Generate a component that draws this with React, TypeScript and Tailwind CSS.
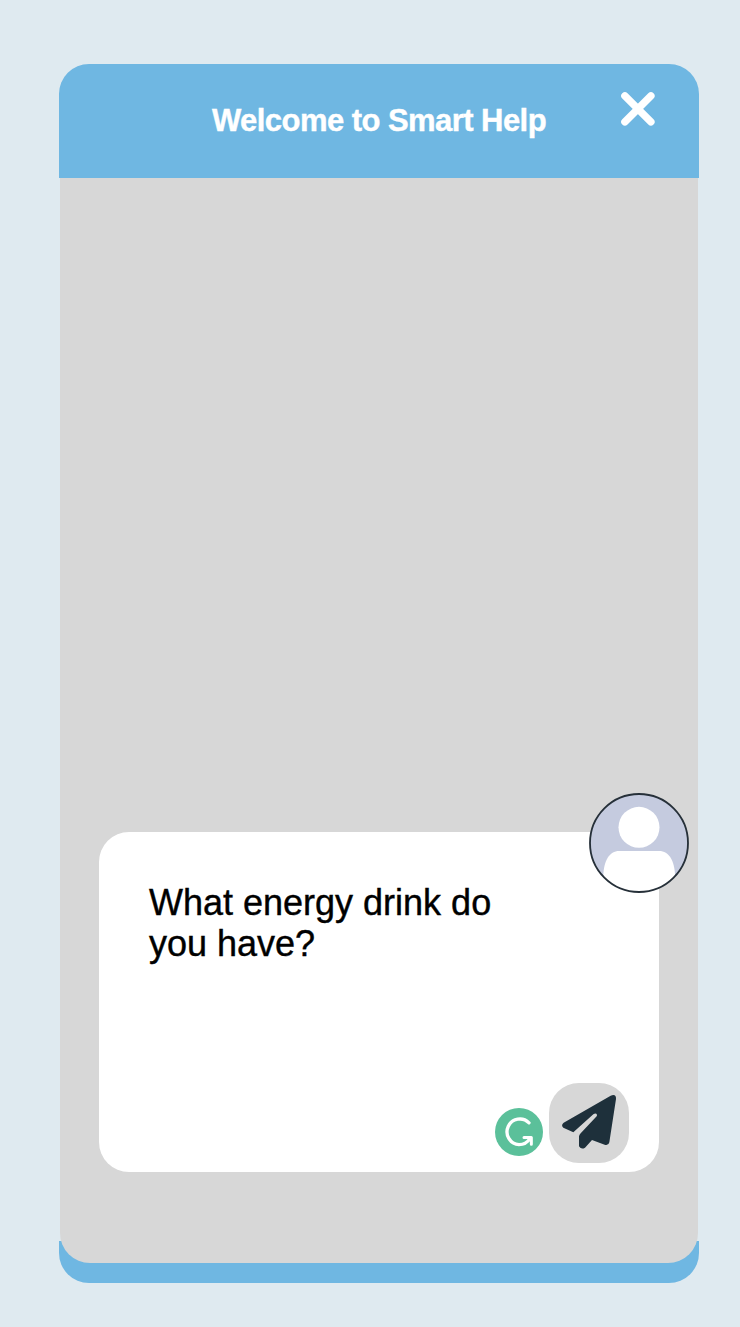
function CloseIcon() {
  return (
    <svg viewBox="0 0 36 36" className="size-9" fill="none" stroke="white" strokeWidth="7.4" strokeLinecap="round">
      <path d="M4.9 4.9 30.9 30.9M30.9 4.9 4.9 30.9" />
    </svg>
  );
}

function Avatar() {
  return (
    <svg viewBox="0 0 300 300" className="size-[100px]">
      <defs>
        <clipPath id="avatar-circle">
          <circle cx="150" cy="150" r="147" />
        </clipPath>
      </defs>
      <circle cx="150" cy="150" r="147" fill="#c5cbdf" />
      <g clipPath="url(#avatar-circle)" fill="white">
        <circle cx="150" cy="103" r="61.5" />
        <path d="M43 245C45 205 60 174 91 174H210C241 174 256 205 258 245V300H43Z" />
      </g>
      <circle cx="150" cy="150" r="147" fill="none" stroke="#263039" strokeWidth="5.5" />
    </svg>
  );
}

function GrammarIcon() {
  return (
    <svg viewBox="0 0 144 144" className="size-12" fill="none" stroke="white" strokeWidth="10" strokeLinecap="round" strokeLinejoin="round">
      <circle cx="72" cy="72" r="72" fill="#5bc09a" stroke="none" />
      <path d="M102 44.500A38.500 38.500 0 1 0 72 110Q93 110 105 92" />
      <path d="M87 88.500H109V109" strokeWidth="9" />
    </svg>
  );
}

function SendIcon() {
  return (
    <svg viewBox="0 0 240 240" className="size-20" fill="#1e303b">
      <path d="M44 119L185 38Q202 32 201 48L181 178Q179 188 169 186L129 171L108 194Q97 201 90 190V160Q91 156 95 151L143 100Q146 95 142 92Q138 90 133 94L73 148L43 134Q35 127 44 119Z" />
    </svg>
  );
}

export default function App() {
  return (
    <main className="h-[1327px] w-[740px] bg-[#dfeaf0] pt-[63.5px] pl-[59.4px] font-['Liberation_Sans',Arial,sans-serif]">
      <section className="flex h-[1219px] w-[639.2px] flex-col">
        <header className="grid h-[114.5px] shrink-0 grid-cols-[1fr_auto_1fr] rounded-t-[30px] bg-[#6fb7e2]">
          <span />
          <h1 className="pt-[39.5px] text-[31px] leading-[36px] font-bold tracking-[-0.55px] whitespace-nowrap text-white [-webkit-text-stroke:0.4px_white]">
            Welcome to Smart Help
          </h1>
          <button aria-label="Close" className="mt-[27.5px] mr-[42.5px] size-9 justify-self-end">
            <CloseIcon />
          </button>
        </header>
        <div className="grid min-h-0 flex-1">
          <div className="col-start-1 row-start-1 h-[42px] self-end rounded-b-[30px] bg-[#6fb7e2]" />
          <div className="z-10 col-start-1 row-start-1 mx-[0.6px] mb-[19.5px] flex flex-col justify-end rounded-b-[30px] bg-[#d7d7d7] px-[39px] pb-[91px]">
            <div className="relative flex h-[340px] flex-col justify-between rounded-[30px] bg-white pt-[50px] pr-[30px] pb-[9px] pl-[50px]">
              <div className="absolute -top-[39px] -right-[30px]">
                <Avatar />
              </div>
              <p className="w-[370px] text-[36px] leading-[41px] text-black [-webkit-text-stroke:0.4px_black]">
                What energy drink do you have?
              </p>
              <div className="flex items-end justify-end gap-[6px]">
                <div className="mb-[7px]">
                  <GrammarIcon />
                </div>
                <button aria-label="Send" className="size-20 rounded-[30px] bg-[#d7d7d7]">
                  <SendIcon />
                </button>
              </div>
            </div>
          </div>
        </div>
      </section>
    </main>
  );
}
